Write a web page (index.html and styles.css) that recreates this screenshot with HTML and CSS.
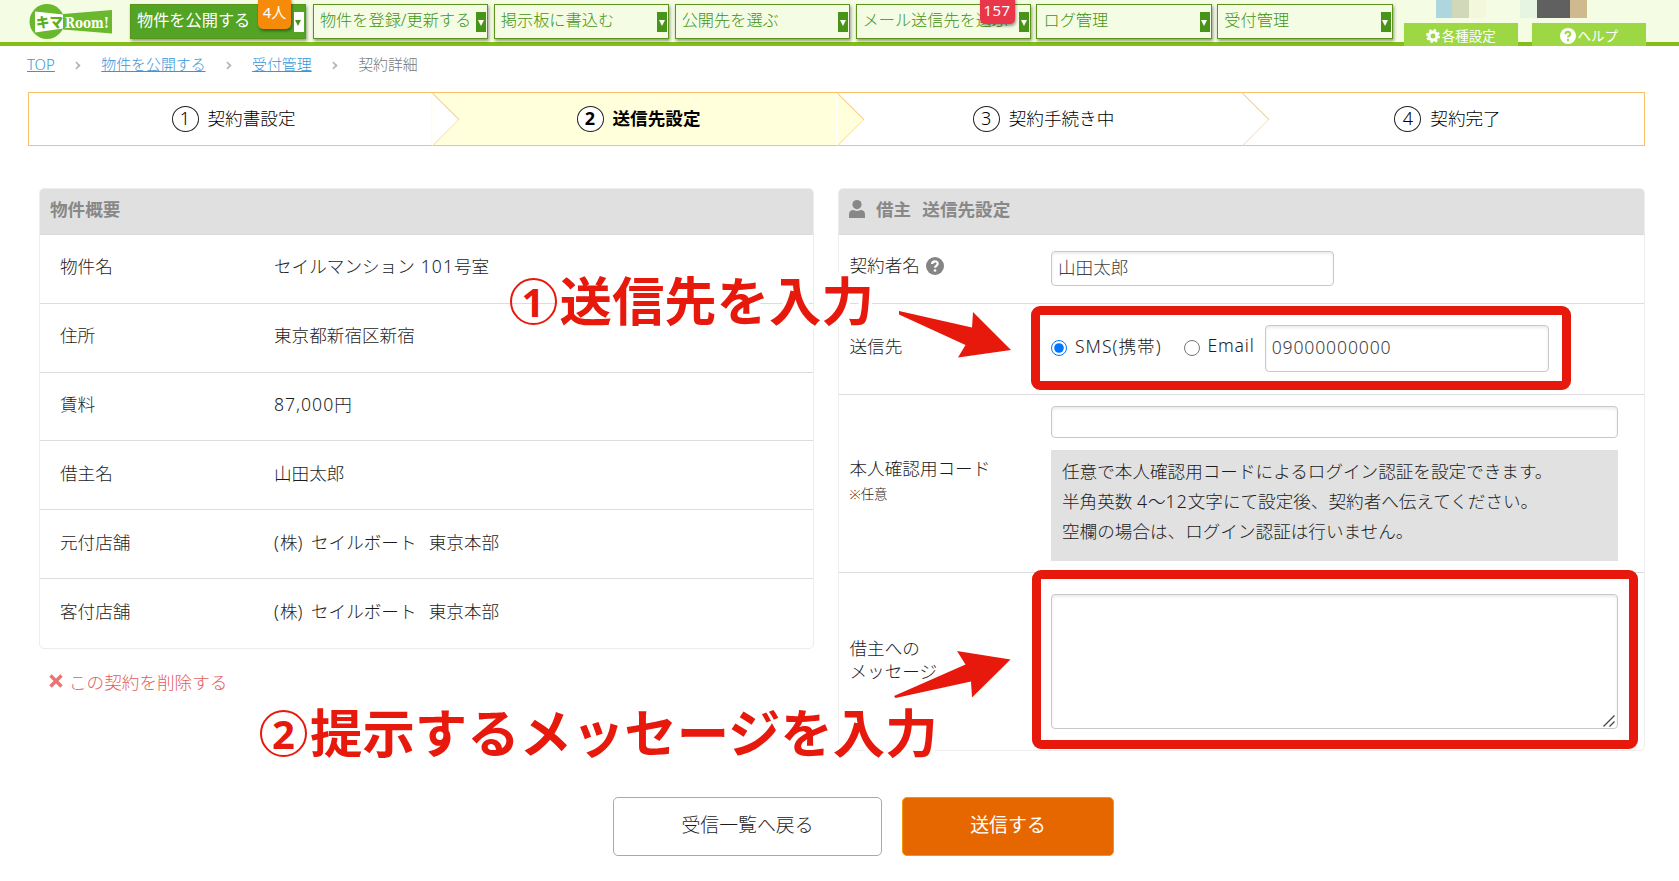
FILE: index.html
```html
<!doctype html>
<html lang="ja">
<head>
<meta charset="utf-8">
<title>契約詳細 - キマRoom!</title>
<link rel="stylesheet" href="styles.css">
</head>
<body>
<header>
	<svg class="logo" width="84" height="37" viewBox="0 0 84 37">
		<circle cx="18" cy="18.5" r="17.5" fill="#6ab82d"/>
		<path d="M34 11L83 7V30.5L34 26.5Z" fill="#6ab82d"/>
		<path d="M6 8.5L34 11.5V25.5L6 29.5Z" fill="#fff"/>
		<text class="logo-kima" x="7" y="24" textLength="27" lengthAdjust="spacingAndGlyphs">キマ</text>
		<text class="logo-room" x="36" y="24.5" textLength="44" lengthAdjust="spacingAndGlyphs">Room!</text>
	</svg>
	<nav>
		<a class="current">物件を公開する<i></i><b class="badge people">4人</b></a>
		<a>物件を登録/更新する<i></i></a>
		<a>掲示板に書込む<i></i></a>
		<a>公開先を選ぶ<i></i></a>
		<a>メール送信先を選ぶ<i></i><b class="badge count">157</b></a>
		<a>ログ管理<i></i></a>
		<a>受付管理<i></i></a>
	</nav>
	<div class="account">
		<div class="user">
			<span class="c1"></span><span class="c2"></span><span class="c3"></span><span class="gap"></span><span class="c4"></span><span class="c5"></span><span class="c5"></span><span class="c6"></span>
		</div>
		<div class="tools">
			<a><svg width="14" height="14" viewBox="0 0 14 14"><circle cx="7" cy="7" r="4" fill="none" stroke="#fff" stroke-width="3"/><circle cx="7" cy="7" r="6" fill="none" stroke="#fff" stroke-width="2" stroke-dasharray="2.4 2.31"/></svg>各種設定</a>
			<a><svg width="16" height="16" viewBox="0 0 16 16"><circle cx="8" cy="8" r="8" fill="#fff"/><path d="M5.4 6.2C5.6 3 10.6 3.2 10.4 6.1C10.3 7.7 8 7.6 8 9.6" fill="none" stroke="#9ed744" stroke-width="2"/><circle cx="8" cy="12" r="1.2" fill="#9ed744"/></svg>ヘルプ</a>
		</div>
	</div>
</header>

<ul class="breadcrumb">
	<li><a>TOP</a></li>
	<li><a>物件を公開する</a></li>
	<li><a>受付管理</a></li>
	<li>契約詳細</li>
</ul>

<ol class="steps">
	<li><span>1</span>契約書設定</li>
	<li class="active"><span>2</span>送信先設定</li>
	<li><span>3</span>契約手続き中</li>
	<li><span>4</span>契約完了</li>
</ol>

<main>
	<div class="left">
		<section class="panel summary">
			<h2>物件概要</h2>
			<dl><dt>物件名</dt><dd>セイルマンション <em>101</em>号室</dd></dl>
			<dl><dt>住所</dt><dd>東京都新宿区新宿</dd></dl>
			<dl><dt>賃料</dt><dd><em>87,000</em>円</dd></dl>
			<dl><dt>借主名</dt><dd>山田太郎</dd></dl>
			<dl><dt>元付店舗</dt><dd><em>(</em>株<em class="paren">)</em> セイルボート&nbsp; 東京本部</dd></dl>
			<dl><dt>客付店舗</dt><dd><em>(</em>株<em class="paren">)</em> セイルボート&nbsp; 東京本部</dd></dl>
		</section>
		<a class="delete"><svg width="14" height="14" viewBox="0 0 14 14"><path d="M1.5 1.5L12.5 12.5M12.5 1.5L1.5 12.5" stroke="#e87474" stroke-width="3.4"/></svg>この契約を削除する</a>
	</div>
	<section class="panel form">
		<h2><svg width="16" height="18" viewBox="0 0 16 18"><circle cx="8" cy="4.6" r="4.6" fill="#888"/><path d="M0 18V14.5Q0 10 4.5 10Q8 12 11.5 10Q16 10 16 14.5V18Z" fill="#888"/></svg>借主&nbsp; 送信先設定</h2>
		<dl class="name">
			<dt>契約者名<svg width="18" height="18" viewBox="0 0 16 16"><circle cx="8" cy="8" r="8" fill="#848484"/><path d="M5.4 6.2C5.6 3 10.6 3.2 10.4 6.1C10.3 7.7 8 7.6 8 9.6" fill="none" stroke="#fff" stroke-width="2"/><circle cx="8" cy="12" r="1.2" fill="#fff"/></svg></dt>
			<dd><input type="text" value="山田太郎"></dd>
		</dl>
		<dl class="dest">
			<dt>送信先</dt>
			<dd>
				<label><input type="radio" name="dest" checked>SMS(携帯)</label>
				<label><input type="radio" name="dest">Email</label>
				<input type="text" value="09000000000">
			</dd>
		</dl>
		<dl class="code">
			<dt>本人確認用コード<small>※任意</small></dt>
			<dd>
				<input type="text">
				<p>任意で本人確認用コードによるログイン認証を設定できます。<br>半角英数 <em>4</em>～<em>12</em>文字にて設定後、契約者へ伝えてください。<br>空欄の場合は、ログイン認証は行いません。</p>
			</dd>
		</dl>
		<dl class="message">
			<dt>借主への<br>メッセージ</dt>
			<dd><textarea></textarea><svg class="grip" width="12" height="12" viewBox="0 0 12 12"><path d="M.5 11.5L11.5 .5M6.5 11.5L11.5 6.5" stroke="#444" stroke-width="1.3"/></svg></dd>
		</dl>
	</section>
</main>

<div class="buttons">
	<button class="back">受信一覧へ戻る</button>
	<button class="send">送信する</button>
</div>

<!-- instructions laid over the screen -->
<div class="frame frame1"></div>
<div class="frame frame2"></div>
<div class="note note1"><span>1</span>送信先を入力</div>
<div class="note note2"><span>2</span>提示するメッセージを入力</div>
<svg class="arrow arrow1" width="114" height="48" viewBox="0 0 114 48"><path d="M1 1L74 17.5L75 2L113 40L60 47.5L67.5 35L1 4.5Z"/></svg>
<svg class="arrow arrow2" width="118" height="48" viewBox="0 0 118 48"><path d="M1 46L72.5 14.5L64 1L117.5 9.5L79 47.5L78 31.5L2.5 48Z"/></svg>
</body>
</html>
```
FILE: styles.css
```css
* {
	box-sizing: border-box;
	margin: 0;
	padding: 0;
}

body {
	background: #fff;
	color: #1c1c1c;
	font-family: "Noto Sans", "Noto Sans CJK JP", sans-serif;
	font-size: 17.6px;
	font-weight: 300;
	height: 881px;
	overflow: hidden;
	position: relative;
}

ul, ol {
	list-style: none;
}

em {
	font-style: normal;
	letter-spacing: 1px;
}

.paren {
	letter-spacing: 2.5px;
}

header {
	background: #f4fde3;
	border-bottom: 4px solid #82bf17;
	display: flex;
	height: 46px;
	padding-left: 29px;
}

.logo {
	flex: none;
	margin-top: 3px;
	overflow: visible;
}

.logo-kima {
	fill: #5aae22;
	font-size: 14px;
	font-weight: 900;
}

.logo-room {
	fill: #fff;
	font-family: "DejaVu Serif", serif;
	font-size: 15px;
	font-weight: bold;
}

nav {
	display: flex;
	gap: 5.4px;
	margin: 4px 0 0 17px;
}

nav a {
	background: #f4fde3;
	border: 1px solid #5c931a;
	box-shadow: 1px 2px 3px rgba(0,0,0,.4);
	color: #449216;
	font-size: 16.2px;
	height: 35px;
	line-height: 30px;
	padding-left: 6px;
	position: relative;
	white-space: nowrap;
	width: 175.5px;
}

nav .current {
	background: #53a325;
	color: #fff;
	font-weight: normal;
	margin-right: 2px;
}

nav i {
	background: #479418;
	height: 20px;
	position: absolute;
	right: 1px;
	top: 7px;
	width: 10px;
}

nav i:after {
	border: 3.5px solid transparent;
	border-bottom: 0;
	border-top: 6px solid #fff;
	content: "";
	left: 1.5px;
	position: absolute;
	top: 8px;
}

nav .current i {
	background: #fff;
}

nav .current i:after {
	border-top-color: #479418;
}

.badge {
	border-radius: 5px;
	box-shadow: 1px 2px 3px rgba(0,0,0,.4);
	color: #fff;
	font-size: 15px;
	font-weight: normal;
	position: absolute;
	text-align: center;
}

.people {
	background: #f68b09;
	height: 34px;
	left: 127px;
	line-height: 34px;
	top: -10px;
	width: 33px;
}

.count {
	background: #e93648;
	height: 29px;
	left: 123px;
	letter-spacing: .5px;
	line-height: 30px;
	top: -10px;
	width: 35px;
}

.account {
	margin-left: 11px;
}

.user {
	display: flex;
	height: 18px;
	margin-left: 32px;
}

.user span {
	width: 16.6px;
}

.c1 { background: #add6df; }
.c2 { background: #d0d8b9; }
.c3 { background: #f3f8dc; }
.user .gap { width: 34.5px; }
.c4 { background: #e6f4e2; }
.c5 { background: #606060; }
.c6 { background: #cfb98e; }

.tools {
	display: flex;
	gap: 14px;
	margin-top: 5px;
}

.tools a {
	align-items: center;
	background: #9ed744;
	color: #fff;
	display: flex;
	font-size: 13.5px;
	font-weight: normal;
	height: 23px;
	justify-content: center;
	width: 114px;
}

.tools svg {
	margin: 2px 2px 0 0;
}

.breadcrumb {
	color: #777;
	display: flex;
	font-size: 14.9px;
	height: 46px;
	line-height: 36px;
	padding-left: 27px;
}

.breadcrumb a {
	color: #3596d8;
	text-decoration: underline;
}

.breadcrumb li + li:before {
	border: solid #b5b5b5;
	border-width: 2px 2px 0 0;
	content: "";
	display: inline-block;
	height: 5px;
	margin: 0 21px 1px 18.5px;
	transform: rotate(45deg) scale(.8);
	width: 5px;
}

.steps {
	border: 1px solid #f9bf69;
	color: #000;
	display: flex;
	height: 54px;
	margin-left: 28px;
	width: 1617px;
}

.steps li {
	align-items: center;
	display: flex;
	justify-content: center;
	padding: 0 0 3px 4px;
	position: relative;
	width: 405px;
}

.steps li:last-child {
	flex: 1;
	padding-left: 7px;
}

.steps span {
	background: #fff;
	border: 1.5px solid #222;
	border-radius: 50%;
	font-size: 18px;
	height: 26px;
	line-height: 23px;
	margin: 2px 9px 0 0;
	text-align: center;
	width: 27px;
}

.steps .active {
	background: #ffffdb;
	box-shadow: -3px 0 #ffffdb;
	font-weight: bold;
}

.steps .active + li {
	box-shadow: -3px 0 #fff;
}

/* arrow heads between the steps */
.steps li + li:before {
	background: #fff;
	border: solid #f9bf69;
	border-width: 1px 1px 0 0;
	clip-path: polygon(0 0, 100% 0, 100% 100%);
	content: "";
	height: 37.5px;
	left: -21px;
	position: absolute;
	top: 7px;
	transform: rotate(45deg);
	width: 37.5px;
}

.steps .active + li:before {
	background: #ffffdb;
}

main {
	display: flex;
	gap: 24px;
	padding: 42px 0 0 39px;
}

.left {
	width: 775px;
}

.panel {
	border: 1px solid #ededed;
	border-radius: 5px;
	overflow: hidden;
}

.panel h2 {
	align-items: center;
	background: #e0e0e0;
	border-bottom: 1px solid #dadada;
	color: #888;
	display: flex;
	font-size: 17.6px;
	height: 46px;
	padding: 0 0 7px 10px;
}

.panel dl {
	align-items: center;
	border-bottom: 1px solid #ddd;
	display: flex;
}

.panel dl:last-child {
	border-bottom: 0;
}

.summary dl {
	height: 68.8px;
	padding: 0 0 6px 20px;
}

.summary dt {
	width: 214px;
}

.summary dd {
	word-spacing: 1.5px;
}

.delete {
	align-items: center;
	color: #e45c5c;
	display: flex;
	gap: 6px;
	padding: 20px 0 0 10px;
}

.form {
	height: 563px;
	width: 807px;
}

.form h2 {
	word-spacing: 1px;
}

.form h2 svg {
	margin: 2px 11px 0 0;
}

.form dt {
	padding-left: 10.5px;
	width: 212px;
}

.form dt svg {
	margin-left: 6px;
	vertical-align: -3px;
}

.form small {
	display: block;
	font-size: 13.4px;
	line-height: 18px;
	margin-top: 4px;
}

.form input[type=text], textarea {
	background: #fff;
	border: 1px solid #c8c8c8;
	border-radius: 4px;
	box-shadow: inset 0 2px 3px rgba(0,0,0,.08);
	color: #404040;
	display: block;
	font: inherit;
	padding: 0 6px 3px;
}

.name {
	height: 69px;
}

.name dt {
	padding-bottom: 9px;
}

.name dd {
	padding-bottom: 1px;
}

.name input[type=text] {
	height: 35px;
	padding-bottom: 4px;
	width: 283px;
}

.dest {
	height: 91px;
}

.dest dt {
	padding-bottom: 7px;
}

.dest dd, .dest label {
	align-items: center;
	display: flex;
}

.dest dd {
	padding-bottom: 2px;
}

.dest label {
	letter-spacing: 1px;
	margin-right: 22px;
	padding-bottom: 6px;
}

.dest label + label {
	letter-spacing: .8px;
	margin-right: 10px;
}

.dest input[type=radio] {
	height: 16px;
	margin: 5px 8px 0 0;
	width: 16px;
}

.dest input[type=text] {
	height: 47px;
	letter-spacing: .85px;
	width: 284px;
}

.code {
	height: 178px;
}

.code dt {
	line-height: 26px;
	padding-bottom: 9px;
}

.code input[type=text] {
	height: 32px;
	width: 567px;
}

.code p {
	background: #e1e1e1;
	height: 111px;
	line-height: 30px;
	margin-top: 12px;
	padding: 6px 11px;
	width: 567px;
}

.message {
	height: 178px;
}

.message dt {
	line-height: 23px;
	padding-bottom: 5px;
}

.message dd {
	padding-bottom: 1px;
	position: relative;
}

.message textarea {
	height: 135px;
	resize: none;
	width: 567px;
}

/* resize handle */
.grip {
	bottom: 3px;
	position: absolute;
	right: 3px;
}

.buttons {
	display: flex;
	gap: 20px;
	margin: 46px 0 0 613px;
}

button {
	border: 1px solid #aaa;
	border-radius: 5px;
	font-family: inherit;
	font-size: 18.9px;
	font-weight: 300;
	height: 59px;
	padding-bottom: 6px;
}

.back {
	background: #fff;
	color: #1c1c1c;
	width: 269px;
}

.send {
	background: #e66700;
	border-color: #f39800;
	color: #fff;
	font-weight: normal;
	width: 212px;
}

.frame {
	border: 9px solid #e6190c;
	border-radius: 9px;
	position: absolute;
}

.frame1 {
	height: 84px;
	left: 1031px;
	top: 306px;
	width: 540px;
}

.frame2 {
	height: 179px;
	left: 1032px;
	top: 570px;
	width: 606px;
}

.note {
	align-items: center;
	color: #e6190c;
	display: flex;
	font-size: 52.4px;
	font-weight: bold;
	line-height: 60px;
	paint-order: stroke;
	position: absolute;
	-webkit-text-stroke: 7px #fff;
	white-space: nowrap;
}

.note span {
	border: 2px solid #e6190c;
	border-radius: 50%;
	font-size: 40px;
	height: 47px;
	line-height: 43px;
	margin-right: 3px;
	text-align: center;
	-webkit-text-stroke: 0;
	width: 47px;
}

.note1 {
	left: 509.5px;
	top: 271px;
}

.note2 {
	left: 260px;
	top: 703px;
}

.arrow {
	fill: #e6190c;
	position: absolute;
}

.arrow1 {
	left: 898px;
	top: 310px;
}

.arrow2 {
	left: 893px;
	top: 650px;
}
```
